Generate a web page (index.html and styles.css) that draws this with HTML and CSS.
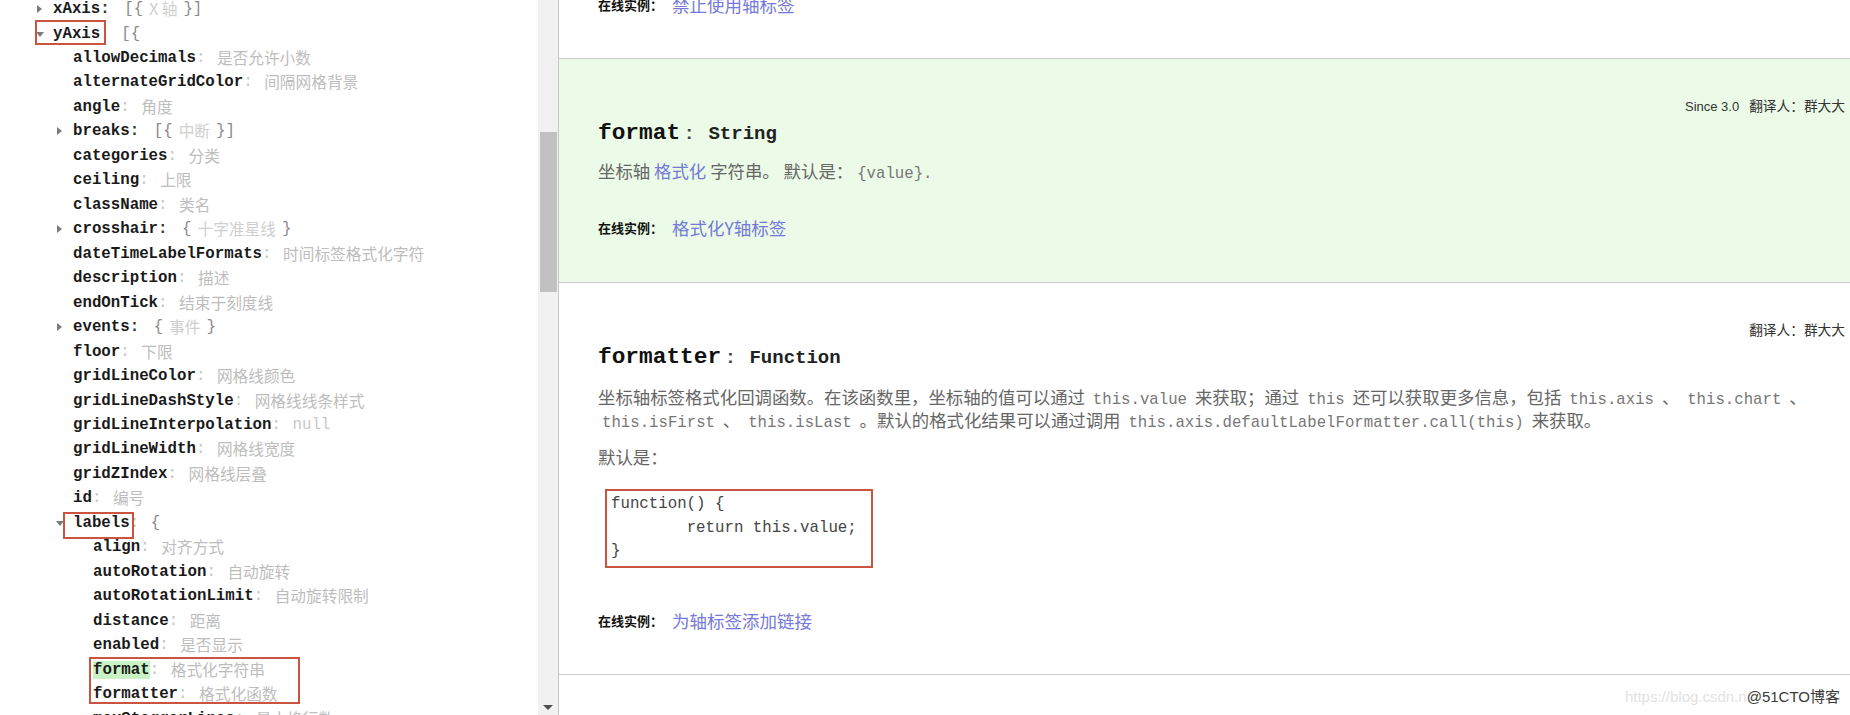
FILE: index.html
```html
<!DOCTYPE html>
<html lang="zh">
<head>
<meta charset="utf-8">
<title>Highcharts API</title>
<link rel="stylesheet" href="styles.css">
</head>
<body>
<div class="app">
  <aside class="nav">
    <div class="tree">
      <div class="row l0"><span class="tog r"></span><span class="key">xAxis</span><span class="punc-d">:</span><span class="brk">[{</span><span class="desc pad">X 轴</span><span class="brk">}]</span></div>
      <div class="row l0"><span class="tog d"></span><span class="key">yAxis</span><span class="sep">:</span><span class="brk">[{</span></div>
      <div class="row l1"><span class="tog"></span><span class="key">allowDecimals</span><span class="sep">:</span><span class="desc">是否允许小数</span></div>
      <div class="row l1"><span class="tog"></span><span class="key">alternateGridColor</span><span class="sep">:</span><span class="desc">间隔网格背景</span></div>
      <div class="row l1"><span class="tog"></span><span class="key">angle</span><span class="sep">:</span><span class="desc">角度</span></div>
      <div class="row l1"><span class="tog r"></span><span class="key">breaks</span><span class="punc-d">:</span><span class="brk">[{</span><span class="desc pad">中断</span><span class="brk">}]</span></div>
      <div class="row l1"><span class="tog"></span><span class="key">categories</span><span class="sep">:</span><span class="desc">分类</span></div>
      <div class="row l1"><span class="tog"></span><span class="key">ceiling</span><span class="sep">:</span><span class="desc">上限</span></div>
      <div class="row l1"><span class="tog"></span><span class="key">className</span><span class="sep">:</span><span class="desc">类名</span></div>
      <div class="row l1"><span class="tog r"></span><span class="key">crosshair</span><span class="punc-d">:</span><span class="brk">{</span><span class="desc pad">十字准星线</span><span class="brk">}</span></div>
      <div class="row l1"><span class="tog"></span><span class="key">dateTimeLabelFormats</span><span class="sep">:</span><span class="desc">时间标签格式化字符</span></div>
      <div class="row l1"><span class="tog"></span><span class="key">description</span><span class="sep">:</span><span class="desc">描述</span></div>
      <div class="row l1"><span class="tog"></span><span class="key">endOnTick</span><span class="sep">:</span><span class="desc">结束于刻度线</span></div>
      <div class="row l1"><span class="tog r"></span><span class="key">events</span><span class="punc-d">:</span><span class="brk">{</span><span class="desc pad">事件</span><span class="brk">}</span></div>
      <div class="row l1"><span class="tog"></span><span class="key">floor</span><span class="sep">:</span><span class="desc">下限</span></div>
      <div class="row l1"><span class="tog"></span><span class="key">gridLineColor</span><span class="sep">:</span><span class="desc">网格线颜色</span></div>
      <div class="row l1"><span class="tog"></span><span class="key">gridLineDashStyle</span><span class="sep">:</span><span class="desc">网格线线条样式</span></div>
      <div class="row l1"><span class="tog"></span><span class="key">gridLineInterpolation</span><span class="sep">:</span><span class="desc mono-desc">null</span></div>
      <div class="row l1"><span class="tog"></span><span class="key">gridLineWidth</span><span class="sep">:</span><span class="desc">网格线宽度</span></div>
      <div class="row l1"><span class="tog"></span><span class="key">gridZIndex</span><span class="sep">:</span><span class="desc">网格线层叠</span></div>
      <div class="row l1"><span class="tog"></span><span class="key">id</span><span class="sep">:</span><span class="desc">编号</span></div>
      <div class="row l1"><span class="tog d"></span><span class="key">labels</span><span class="sep">:</span><span class="brk">{</span></div>
      <div class="row l2"><span class="tog"></span><span class="key">align</span><span class="sep">:</span><span class="desc">对齐方式</span></div>
      <div class="row l2"><span class="tog"></span><span class="key">autoRotation</span><span class="sep">:</span><span class="desc">自动旋转</span></div>
      <div class="row l2"><span class="tog"></span><span class="key">autoRotationLimit</span><span class="sep">:</span><span class="desc">自动旋转限制</span></div>
      <div class="row l2"><span class="tog"></span><span class="key">distance</span><span class="sep">:</span><span class="desc">距离</span></div>
      <div class="row l2"><span class="tog"></span><span class="key">enabled</span><span class="sep">:</span><span class="desc">是否显示</span></div>
      <div class="row l2"><span class="tog"></span><span class="key hl">format</span><span class="sep">:</span><span class="desc">格式化字符串</span></div>
      <div class="row l2"><span class="tog"></span><span class="key">formatter</span><span class="sep">:</span><span class="desc">格式化函数</span></div>
      <div class="row l2"><span class="tog"></span><span class="key">maxStaggerLines</span><span class="sep">:</span><span class="desc">最大换行数</span></div>
    </div>
    <div class="mark mark-yaxis"></div>
    <div class="mark mark-labels"></div>
    <div class="mark mark-format"></div>
  </aside>
  <div class="scrollbar">
    <div class="thumb"></div>
    <div class="arrow-down"></div>
  </div>
  <main class="doc">
    <section class="item item-top">
      <div class="example first"><span class="ex-label">在线实例：</span><a class="ex-link" href="#">禁止使用轴标签</a></div>
    </section>
    <section class="item item-active">
      <div class="meta"><span class="since">Since 3.0</span><span class="cn">翻译人：群大大</span></div>
      <h3 class="title"><span class="name">format</span><span class="colon">:</span><span class="type">String</span></h3>
      <p class="desc-text desc-short">坐标轴 <a class="ilink" href="#">格式化</a> 字符串。 默认是：<code class="ic">{value}.</code></p>
      <div class="example ex-green"><span class="ex-label">在线实例：</span><a class="ex-link" href="#">格式化Y轴标签</a></div>
    </section>
    <section class="item">
      <div class="meta"><span class="cn">翻译人：群大大</span></div>
      <h3 class="title"><span class="name">formatter</span><span class="colon">:</span><span class="type">Function</span></h3>
      <p class="desc-text desc-long">坐标轴标签格式化回调函数。在该函数里，坐标轴的值可以通过 <code class="ic">this.value</code> 来获取；通过 <code class="ic">this</code> 还可以获取更多信息，包括 <code class="ic">this.axis</code> 、 <code class="ic">this.chart</code> 、 <code class="ic">this.isFirst</code> 、 <code class="ic">this.isLast</code> 。默认的格式化结果可以通过调用 <code class="ic">this.axis.defaultLabelFormatter.call(this)</code> 来获取。</p>
      <p class="desc-text default">默认是：</p>
      <pre class="code">function() {
	return this.value;
}</pre>
      <div class="example ex-code"><span class="ex-label">在线实例：</span><a class="ex-link" href="#">为轴标签添加链接</a></div>
    </section>
  </main>
  <div class="watermark"><span class="wm-url">https://blog.csdn.n</span><span class="wm-site">@51CTO博客</span></div>
</div>
</body>
</html>
```

FILE: styles.css
```css
html, body {
  margin: 0;
  padding: 0;
  height: 715px;
  overflow: hidden;
  background: #ffffff;
}

.app {
  display: flex;
  height: 715px;
  position: relative;
  font-family: "Noto Sans CJK SC", sans-serif;
}

/* ---------- left navigation tree ---------- */
.nav {
  width: 538px;
  flex: none;
  position: relative;
  overflow: hidden;
}

.tree {
  margin-top: -3.2px;
}

.row {
  display: flex;
  align-items: center;
  height: 24.47px;
  white-space: pre;
}

.l0 { padding-left: 36px; }
.l1 { padding-left: 56px; }
.l2 { padding-left: 76px; }

.tog {
  width: 17px;
  flex: none;
  display: flex;
  align-items: center;
}

.tog.r::before {
  content: "";
  margin-left: 1px;
  border-left: 5px solid #7a7a7a;
  border-top: 4px solid transparent;
  border-bottom: 4px solid transparent;
}

.tog.d::before {
  content: "";
  margin-top: 2px;
  border-top: 5px solid #7a7a7a;
  border-left: 4px solid transparent;
  border-right: 4px solid transparent;
}

.key {
  font-family: "Liberation Mono", monospace;
  font-weight: bold;
  font-size: 15.75px;
  color: #1a1a1a;
  line-height: 18px;
}

.key.hl {
  background: #c9f3c4;
}

.sep, .punc-d {
  font-family: "Liberation Mono", monospace;
  font-size: 15.75px;
  color: #c4c4c4;
  width: 21px;
  flex: none;
}

.punc-d {
  color: #333;
  font-weight: bold;
  width: 24px;
}

.brk {
  font-family: "Liberation Mono", monospace;
  font-size: 15.75px;
  color: #8a8a8a;
}

.desc {
  font-family: "Noto Sans CJK SC", sans-serif;
  font-size: 15.7px;
  color: #bdbdbd;
  line-height: 20px;
}

.desc.pad {
  padding: 0 6px;
  color: #cfcfcf;
}

.mono-desc {
  font-family: "Liberation Mono", monospace;
  font-size: 15.75px;
  color: #c8c8c8;
}

/* annotation boxes drawn over the tree */
.mark {
  position: absolute;
  border: 2px solid #c9543f;
  box-sizing: border-box;
  pointer-events: none;
}

.mark-yaxis { left: 35px; top: 20px; width: 71px; height: 25px; }
.mark-labels { left: 63px; top: 512px; width: 71px; height: 27px; }
.mark-format { left: 89px; top: 657px; width: 211px; height: 47px; }

/* ---------- scrollbar ---------- */
.scrollbar {
  width: 20px;
  flex: none;
  background: #f1f1f1;
  border-right: 1px solid #c6c6c6;
  display: flex;
  flex-direction: column;
  align-items: center;
}

.thumb {
  margin-top: 132px;
  width: 17px;
  height: 160px;
  background: #c1c1c1;
  margin-left: 1px;
}

.arrow-down {
  margin-top: auto;
  margin-bottom: 5px;
  border-top: 5px solid #505050;
  border-left: 5px solid transparent;
  border-right: 5px solid transparent;
}

/* ---------- documentation ---------- */
.doc {
  flex: 1;
  min-width: 0;
  overflow: hidden;
}

.item {
  display: flow-root;
  padding: 38px 5px 40px 39px;
  border-bottom: 1px solid #cccccc;
}

.item-top {
  height: 59px;
  padding-top: 0;
  padding-bottom: 0;
  box-sizing: border-box;
}

.item-active {
  background: #ebfbe7;
  padding-bottom: 42px;
}

.meta {
  display: flex;
  justify-content: flex-end;
  align-items: baseline;
  font-family: "Liberation Sans", "Noto Sans CJK SC", sans-serif;
  font-size: 13px;
  line-height: 20px;
  color: #333;
}

.meta .since {
  margin-right: 10px;
}

.meta .cn {
  font-size: 13.7px;
}

.title {
  margin: 2px 0 0 0;
  display: flex;
  align-items: baseline;
  height: 28px;
  line-height: 28px;
  font-weight: bold;
}

.title .name {
  font-family: "Liberation Mono", monospace;
  font-size: 22.8px;
  color: #111;
}

.title .colon {
  font-family: "Liberation Sans", sans-serif;
  font-size: 19px;
  color: #444;
  margin: 0 16px 0 6px;
}

.title .type {
  font-family: "Liberation Mono", monospace;
  font-size: 19px;
  color: #222;
}

.desc-text {
  margin: 12.5px 0 0 0;
  font-family: "Noto Sans CJK SC", sans-serif;
  font-size: 17.4px;
  line-height: 25px;
  color: #666;
}

.desc-short {
  margin-top: 10.5px;
}

.desc-long {
  margin-top: 13.5px;
  line-height: 23px;
}

.desc-text.default {
  margin-top: 13.5px;
}

.ilink {
  color: #7579d8;
  text-decoration: none;
}

.ic {
  font-family: "Liberation Mono", monospace;
  font-size: 15.7px;
  line-height: 16px;
  color: #777;
  padding: 0 4px;
}

.code {
  display: block;
  width: fit-content;
  margin: 20px 0 0 7px;
  padding: 2px 14px 2px 4px;
  border: 2px solid #c9543f;
  font-family: "Liberation Mono", monospace;
  font-size: 15.75px;
  line-height: 23.5px;
  color: #444;
  tab-size: 8;
}

.example {
  display: flex;
  align-items: center;
  height: 26px;
}

.example.first {
  margin-top: -9px;
}

.ex-green {
  margin-top: 31.5px;
}

.ex-code {
  margin-top: 40px;
}

.ex-label {
  font-family: "Noto Sans CJK SC", sans-serif;
  font-size: 13px;
  font-weight: bold;
  color: #111;
  margin-right: 9px;
}

.ex-link {
  font-family: "Noto Sans CJK SC", sans-serif;
  font-size: 17.5px;
  color: #7579d8;
  text-decoration: none;
}

/* ---------- watermark ---------- */
.watermark {
  position: absolute;
  right: 10px;
  top: 686px;
  display: flex;
  align-items: center;
  font-family: "Liberation Sans", "Noto Sans CJK SC", sans-serif;
  font-size: 15px;
  line-height: 22px;
}

.wm-url {
  color: #e2e2e2;
}

.wm-site {
  color: #3a3a3a;
  text-shadow: 0 0 2px #fff, 0 0 2px #fff;
}
```
